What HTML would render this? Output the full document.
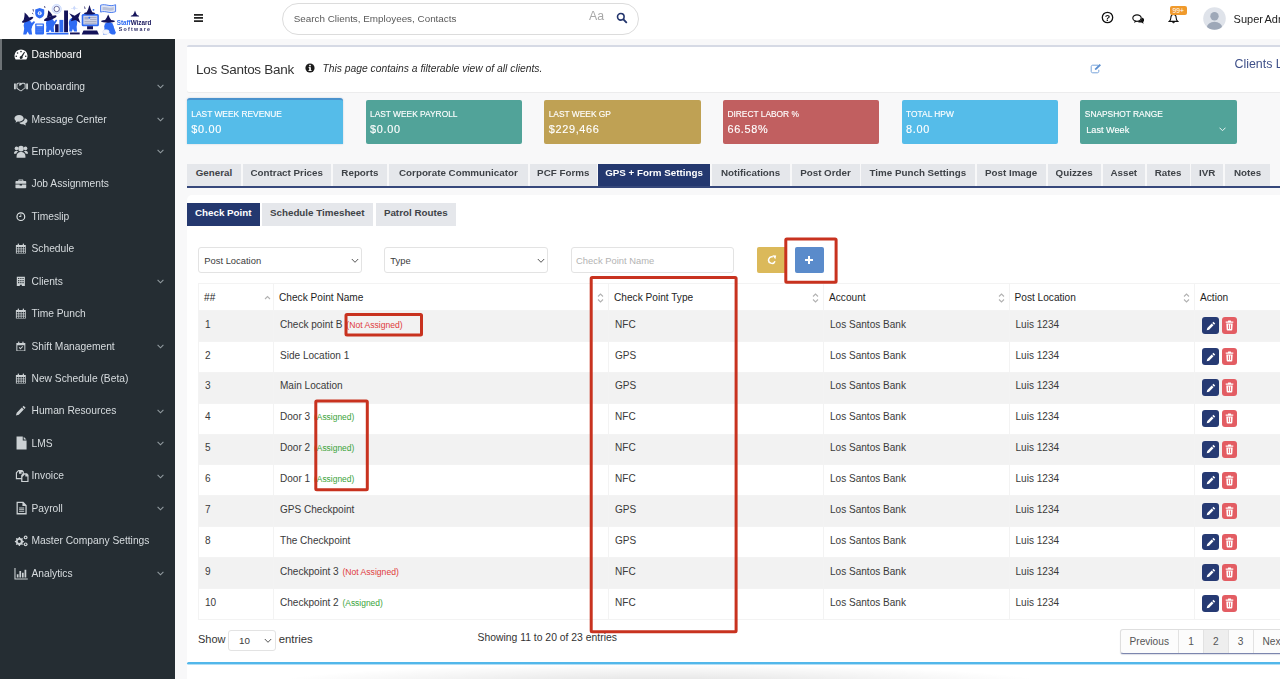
<!DOCTYPE html>
<html lang="en">
<head>
<meta charset="utf-8">
<title>Los Santos Bank - Check Point</title>
<style>
*{box-sizing:border-box;margin:0;padding:0}
html,body{width:1280px;height:679px;overflow:hidden;background:#f8f8f9;font-family:"Liberation Sans",sans-serif;color:#444}
.abs{position:absolute}
#page{position:relative;width:1280px;height:679px;overflow:hidden;opacity:.9999}
/* topbar */
#topbar{position:absolute;left:0;top:0;width:1280px;height:39px;background:#fff}
#search{position:absolute;left:282px;top:3px;width:357px;height:32px;border:1px solid #dcdcdc;border-radius:16px;background:#fff}
#search span.ph{position:absolute;left:10.7px;top:8.7px;font-size:9.87px;color:#5a5a5a;letter-spacing:0px;white-space:nowrap}
/* sidebar */
#sidebar{position:absolute;left:0;top:39px;width:175px;height:640px;background:#252d33}
#sidebar .active{position:absolute;left:0;top:0;width:175px;height:30.7px;background:#20272b;border-left:2px solid #6d7275}
.mi{position:absolute;left:0;width:175px;height:16px;color:#d7dcdf;font-size:10.25px;white-space:nowrap}
.mi .t{position:absolute;left:31.5px;top:.7px;line-height:16px;letter-spacing:0}
.mi svg.ic{position:absolute;left:14px;top:1.8px;width:14px;height:12.9px;fill:#ccd1d4}
.mi svg.ic.sm{left:15.3px;top:2.6px;width:11.7px;height:10.8px}
.mi svg.ic.fl{left:13.6px;top:1px;width:15px;height:13.85px}
.mi svg.ch{position:absolute;left:157px;top:6px;width:7px;height:5px;fill:none;stroke:#919a9f;stroke-width:1.1}
/* content */
#hdr{position:absolute;left:187px;top:45px;width:1200px;height:46.5px;background:#fff;border-top:2px solid #d6dae5;border-radius:2px;box-shadow:0 1px 1px rgba(0,0,0,.06)}
.card{position:absolute;top:100px;width:156.5px;height:44px;border-radius:2px;color:#fff}
.card .l{position:absolute;left:4.5px;top:9.1px;font-size:8.4px;white-space:nowrap;-webkit-text-stroke:.13px #fff}
.card .v{position:absolute;left:4.5px;top:23px;font-size:10.9px;letter-spacing:.68px;white-space:nowrap;-webkit-text-stroke:.13px #fff}
.tab{position:absolute;top:164px;height:22px;background:#e5e7eb;color:#3f4348;font-weight:bold;font-size:9.8px;line-height:18.6px;text-align:center;white-space:nowrap}
.tab.on{background:#24386f;color:#fff}
#tabline{position:absolute;left:187px;top:186px;width:1100px;height:1.6px;background:#36487b}
#panel{position:absolute;left:187px;top:195px;width:1200px;height:490px;background:#fff;border-radius:5px 0 0 0}
#bline{position:absolute;left:187px;top:662px;width:1200px;height:3px;background:linear-gradient(#52b7ea 0,#52b7ea 2px,rgba(82,183,234,.45) 2px,rgba(82,183,234,.45) 3px);border-radius:2px 0 0 2px}
#bshadow{position:absolute;left:270px;top:664.5px;width:780px;height:14.5px;background:radial-gradient(ellipse 390px 20px at 50% 135%,rgba(0,0,0,.12),rgba(0,0,0,0) 100%)}
.sel{position:absolute;top:247px;height:26px;border:1px solid #e3e3e3;border-radius:3px;background:#fff;font-size:9.4px;color:#3c3c3c;line-height:25px;padding-left:5.3px;white-space:nowrap}
.sel svg{position:absolute;right:2px;top:9.5px;width:8px;height:6px;fill:none;stroke:#555;stroke-width:1}
table{position:absolute;left:198px;top:283px;border-collapse:collapse;table-layout:fixed;width:1200px;font-size:10.05px}
th,td{border:1px solid #f3f3f3;text-align:left;font-weight:normal;white-space:nowrap;overflow:hidden;position:relative}
th{height:27px;color:#1f1f1f;padding-left:5px;font-size:10.15px}
td{height:30.875px;color:#3a3a3a;padding-left:6px;padding-bottom:3.6px}
tr.o td{background:#f2f2f2}
.na{color:#e03a3a;font-size:8.6px;margin-left:1px}
.as{color:#3aa43a;font-size:8.45px;margin-left:1px}
.srt{position:absolute;right:4px;top:8px;width:7px;height:12px;fill:none;stroke:#b2b2b2;stroke-width:1.1}
.be,.bd{position:absolute;top:6.4px;height:16.8px;border-radius:3px}
.be{left:7.4px;width:16.4px;background:#263a73}
.bd{left:26.8px;width:15.3px;background:#e35d63}
.red{position:absolute;border:2.5px solid #cc3524;border-radius:1px}
</style>
</head>
<body>
<div id="page">

<div id="panel"></div><div id="bline"></div><div id="bshadow"></div>
<div class="tab on" style="top:203px;height:22.5px;line-height:19px;left:187px;width:72.5px">Check Point</div>
<div class="tab" style="top:203px;height:22.5px;line-height:19px;left:261.5px;width:111.5px">Schedule Timesheet</div>
<div class="tab" style="top:203px;height:22.5px;line-height:19px;left:375.5px;width:80.5px">Patrol Routes</div>
<div class="sel" style="left:198px;width:163.6px">Post Location<svg viewBox="0 0 8 6"><path d="M.8 1L4 4.3 7.200 1"/></svg></div>
<div class="sel" style="left:384px;width:164px">Type<svg viewBox="0 0 8 6"><path d="M.8 1L4 4.3 7.200 1"/></svg></div>
<div class="sel" style="left:571px;width:163px;color:#b3b3b3;padding-left:4px">Check Point Name</div>
<div class="abs" style="left:757px;top:247px;width:29.5px;height:26px;background:#dbb95a;border-radius:2px"><svg class="abs" style="left:9.5px;top:8px" width="10" height="10" viewBox="0 0 10 10"><path d="M8 6.2A3.300 3.300 0 115.900 1.900" fill="none" stroke="#fff" stroke-width="1.5"/><path d="M5.300.2L9.200.6 8.300 4.200z" fill="#fff"/></svg></div>
<div class="abs" style="left:786px;top:239px;width:50px;height:43.5px;background:#fff"></div>
<div class="abs" style="left:794.5px;top:247px;width:29.5px;height:26px;background:#5a8bcb;border-radius:2px"><svg class="abs" style="left:10.5px;top:9px" width="8" height="8" viewBox="0 0 8 8"><path d="M3 0h2v3h3v2H5v3H3V5H0V3h3z" fill="#fff"/></svg></div>
<table><colgroup><col style="width:75px"><col style="width:335px"><col style="width:215px"><col style="width:185.5px"><col style="width:185.5px"><col style="width:204px"></colgroup>
<tr><th>##<svg class="srt" style="right:1.7px" viewBox="0 0 7 12"><path d="M1 7L3.500 4.500 6 7"/></svg></th><th>Check Point Name<svg class="srt" viewBox="0 0 7 12"><path d="M1 4.500L3.500 2 6 4.500M1 7.500L3.500 10 6 7.500"/></svg></th><th>Check Point Type<svg class="srt" viewBox="0 0 7 12"><path d="M1 4.500L3.500 2 6 4.500M1 7.500L3.500 10 6 7.500"/></svg></th><th>Account<svg class="srt" viewBox="0 0 7 12"><path d="M1 4.500L3.500 2 6 4.500M1 7.500L3.500 10 6 7.500"/></svg></th><th>Post Location<svg class="srt" viewBox="0 0 7 12"><path d="M1 4.500L3.500 2 6 4.500M1 7.500L3.500 10 6 7.500"/></svg></th><th>Action</th></tr>
<tr class="o"><td>1</td><td>Check point B <span class="na">(Not Assigned)</span></td><td>NFC</td><td>Los Santos Bank</td><td>Luis 1234</td><td><span class="be"><svg class="abs" style="left:3.5px;top:3.5px" width="10" height="10" viewBox="0 0 10 10"><path d="M7.400.8l1.800 1.800-1.100 1.100-1.800-1.800zM5.700 2.500l1.800 1.800-4.400 4.400-2.400.6.600-2.400z" fill="#fff"/></svg></span><span class="bd"><svg class="abs" style="left:3.5px;top:3px" width="9" height="11" viewBox="0 0 9 11"><path d="M3.200.6h2.600l.4.900h2.100v1.200H.7V1.500h2.100zM1.300 3.400h6.400l-.4 6.300c0 .5-.4.800-.8.800h-4c-.4 0-.8-.3-.8-.8zM3 4.600v4.500h.8V4.600zM5.200 4.600v4.500H6V4.600z" fill="#fff" fill-rule="evenodd"/></svg></span></td></tr>
<tr class="e"><td>2</td><td>Side Location 1 </td><td>GPS</td><td>Los Santos Bank</td><td>Luis 1234</td><td><span class="be"><svg class="abs" style="left:3.5px;top:3.5px" width="10" height="10" viewBox="0 0 10 10"><path d="M7.400.8l1.800 1.800-1.100 1.100-1.800-1.800zM5.700 2.500l1.800 1.800-4.400 4.400-2.400.6.600-2.400z" fill="#fff"/></svg></span><span class="bd"><svg class="abs" style="left:3.5px;top:3px" width="9" height="11" viewBox="0 0 9 11"><path d="M3.200.6h2.600l.4.900h2.100v1.200H.7V1.500h2.100zM1.300 3.400h6.400l-.4 6.300c0 .5-.4.800-.8.800h-4c-.4 0-.8-.3-.8-.8zM3 4.600v4.500h.8V4.600zM5.200 4.600v4.500H6V4.600z" fill="#fff" fill-rule="evenodd"/></svg></span></td></tr>
<tr class="o"><td>3</td><td>Main Location </td><td>GPS</td><td>Los Santos Bank</td><td>Luis 1234</td><td><span class="be"><svg class="abs" style="left:3.5px;top:3.5px" width="10" height="10" viewBox="0 0 10 10"><path d="M7.400.8l1.800 1.800-1.100 1.100-1.800-1.800zM5.700 2.500l1.800 1.800-4.400 4.400-2.400.6.600-2.400z" fill="#fff"/></svg></span><span class="bd"><svg class="abs" style="left:3.5px;top:3px" width="9" height="11" viewBox="0 0 9 11"><path d="M3.200.6h2.600l.4.900h2.100v1.200H.7V1.500h2.100zM1.300 3.400h6.400l-.4 6.300c0 .5-.4.800-.8.800h-4c-.4 0-.8-.3-.8-.8zM3 4.600v4.500h.8V4.600zM5.200 4.600v4.500H6V4.600z" fill="#fff" fill-rule="evenodd"/></svg></span></td></tr>
<tr class="e"><td>4</td><td>Door 3 <span class="as">(Assigned)</span></td><td>NFC</td><td>Los Santos Bank</td><td>Luis 1234</td><td><span class="be"><svg class="abs" style="left:3.5px;top:3.5px" width="10" height="10" viewBox="0 0 10 10"><path d="M7.400.8l1.800 1.800-1.100 1.100-1.800-1.800zM5.700 2.500l1.800 1.800-4.400 4.400-2.400.6.600-2.400z" fill="#fff"/></svg></span><span class="bd"><svg class="abs" style="left:3.5px;top:3px" width="9" height="11" viewBox="0 0 9 11"><path d="M3.200.6h2.600l.4.900h2.100v1.200H.7V1.500h2.100zM1.300 3.400h6.400l-.4 6.300c0 .5-.4.800-.8.800h-4c-.4 0-.8-.3-.8-.8zM3 4.600v4.500h.8V4.600zM5.200 4.600v4.500H6V4.600z" fill="#fff" fill-rule="evenodd"/></svg></span></td></tr>
<tr class="o"><td>5</td><td>Door 2 <span class="as">(Assigned)</span></td><td>NFC</td><td>Los Santos Bank</td><td>Luis 1234</td><td><span class="be"><svg class="abs" style="left:3.5px;top:3.5px" width="10" height="10" viewBox="0 0 10 10"><path d="M7.400.8l1.800 1.800-1.100 1.100-1.800-1.800zM5.700 2.500l1.800 1.800-4.400 4.400-2.400.6.600-2.400z" fill="#fff"/></svg></span><span class="bd"><svg class="abs" style="left:3.5px;top:3px" width="9" height="11" viewBox="0 0 9 11"><path d="M3.200.6h2.600l.4.900h2.100v1.200H.7V1.500h2.100zM1.300 3.400h6.400l-.4 6.300c0 .5-.4.800-.8.800h-4c-.4 0-.8-.3-.8-.8zM3 4.600v4.500h.8V4.600zM5.200 4.600v4.500H6V4.600z" fill="#fff" fill-rule="evenodd"/></svg></span></td></tr>
<tr class="e"><td>6</td><td>Door 1 <span class="as">(Assigned)</span></td><td>NFC</td><td>Los Santos Bank</td><td>Luis 1234</td><td><span class="be"><svg class="abs" style="left:3.5px;top:3.5px" width="10" height="10" viewBox="0 0 10 10"><path d="M7.400.8l1.800 1.800-1.100 1.100-1.800-1.800zM5.700 2.500l1.800 1.800-4.400 4.400-2.400.6.600-2.400z" fill="#fff"/></svg></span><span class="bd"><svg class="abs" style="left:3.5px;top:3px" width="9" height="11" viewBox="0 0 9 11"><path d="M3.200.6h2.600l.4.900h2.100v1.200H.7V1.500h2.100zM1.300 3.400h6.400l-.4 6.300c0 .5-.4.800-.8.800h-4c-.4 0-.8-.3-.8-.8zM3 4.600v4.500h.8V4.600zM5.200 4.600v4.500H6V4.600z" fill="#fff" fill-rule="evenodd"/></svg></span></td></tr>
<tr class="o"><td>7</td><td>GPS Checkpoint </td><td>GPS</td><td>Los Santos Bank</td><td>Luis 1234</td><td><span class="be"><svg class="abs" style="left:3.5px;top:3.5px" width="10" height="10" viewBox="0 0 10 10"><path d="M7.400.8l1.800 1.800-1.100 1.100-1.800-1.800zM5.700 2.500l1.800 1.800-4.400 4.400-2.400.6.600-2.400z" fill="#fff"/></svg></span><span class="bd"><svg class="abs" style="left:3.5px;top:3px" width="9" height="11" viewBox="0 0 9 11"><path d="M3.200.6h2.600l.4.900h2.100v1.200H.7V1.500h2.100zM1.300 3.400h6.400l-.4 6.300c0 .5-.4.800-.8.800h-4c-.4 0-.8-.3-.8-.8zM3 4.600v4.500h.8V4.600zM5.200 4.600v4.500H6V4.600z" fill="#fff" fill-rule="evenodd"/></svg></span></td></tr>
<tr class="e"><td>8</td><td>The Checkpoint </td><td>GPS</td><td>Los Santos Bank</td><td>Luis 1234</td><td><span class="be"><svg class="abs" style="left:3.5px;top:3.5px" width="10" height="10" viewBox="0 0 10 10"><path d="M7.400.8l1.800 1.800-1.100 1.100-1.800-1.800zM5.700 2.500l1.800 1.800-4.400 4.400-2.400.6.600-2.400z" fill="#fff"/></svg></span><span class="bd"><svg class="abs" style="left:3.5px;top:3px" width="9" height="11" viewBox="0 0 9 11"><path d="M3.200.6h2.600l.4.900h2.100v1.200H.7V1.500h2.100zM1.300 3.400h6.400l-.4 6.300c0 .5-.4.800-.8.800h-4c-.4 0-.8-.3-.8-.8zM3 4.600v4.500h.8V4.600zM5.200 4.600v4.500H6V4.600z" fill="#fff" fill-rule="evenodd"/></svg></span></td></tr>
<tr class="o"><td>9</td><td>Checkpoint 3 <span class="na">(Not Assigned)</span></td><td>NFC</td><td>Los Santos Bank</td><td>Luis 1234</td><td><span class="be"><svg class="abs" style="left:3.5px;top:3.5px" width="10" height="10" viewBox="0 0 10 10"><path d="M7.400.8l1.800 1.800-1.100 1.100-1.800-1.800zM5.700 2.500l1.800 1.800-4.400 4.400-2.400.6.600-2.400z" fill="#fff"/></svg></span><span class="bd"><svg class="abs" style="left:3.5px;top:3px" width="9" height="11" viewBox="0 0 9 11"><path d="M3.200.6h2.600l.4.900h2.100v1.200H.7V1.500h2.100zM1.300 3.400h6.400l-.4 6.300c0 .5-.4.800-.8.800h-4c-.4 0-.8-.3-.8-.8zM3 4.600v4.500h.8V4.600zM5.200 4.600v4.500H6V4.600z" fill="#fff" fill-rule="evenodd"/></svg></span></td></tr>
<tr class="e"><td>10</td><td>Checkpoint 2 <span class="as">(Assigned)</span></td><td>NFC</td><td>Los Santos Bank</td><td>Luis 1234</td><td><span class="be"><svg class="abs" style="left:3.5px;top:3.5px" width="10" height="10" viewBox="0 0 10 10"><path d="M7.400.8l1.800 1.800-1.100 1.100-1.800-1.800zM5.700 2.500l1.800 1.800-4.400 4.400-2.400.6.600-2.400z" fill="#fff"/></svg></span><span class="bd"><svg class="abs" style="left:3.5px;top:3px" width="9" height="11" viewBox="0 0 9 11"><path d="M3.200.6h2.600l.4.900h2.100v1.200H.7V1.500h2.100zM1.300 3.400h6.400l-.4 6.300c0 .5-.4.800-.8.800h-4c-.4 0-.8-.3-.8-.8zM3 4.600v4.500h.8V4.600zM5.200 4.600v4.500H6V4.600z" fill="#fff" fill-rule="evenodd"/></svg></span></td></tr>
</table>
<div class="abs" style="left:198px;top:633.2px;font-size:11px;color:#333;white-space:nowrap">Show</div>
<div class="sel" style="left:228px;top:629.5px;width:47.5px;height:21.5px;line-height:20px;padding-left:10px;font-size:9.8px">10<svg style="top:7px;right:3px" viewBox="0 0 8 6"><path d="M.8 1L4 4.3 7.200 1"/></svg></div>
<div class="abs" style="left:278.7px;top:633px;font-size:11.3px;color:#333;white-space:nowrap">entries</div>
<div class="abs" style="left:477.5px;top:632.2px;font-size:10.38px;color:#333;white-space:nowrap">Showing 11 to 20 of 23 entries</div>
<div class="abs" id="pg" style="left:1119.5px;top:629px;height:25px;width:200px;border:1px solid #dedede;border-bottom:1.5px solid #7c86ae;border-radius:3px 0 0 3px;background:#fcfcfc;font-size:10.15px;color:#555;line-height:23px;white-space:nowrap;box-shadow:0 1px 1px rgba(40,50,100,.15)"><span class="abs" style="left:0;width:58.5px;text-align:center;border-right:1px solid #e2e2e2">Previous</span><span class="abs" style="left:58.5px;width:25px;text-align:center;border-right:1px solid #e2e2e2">1</span><span class="abs" style="left:83.5px;width:24.5px;text-align:center;border-right:1px solid #e2e2e2;background:#eee">2</span><span class="abs" style="left:108px;width:25px;text-align:center;border-right:1px solid #e2e2e2">3</span><span class="abs" style="left:133px;width:50px;padding-left:9px">Next</span></div>

<div id="hdr">
<div class="abs" style="left:9px;top:15px;font-size:13.5px;letter-spacing:-.27px;color:#333;white-space:nowrap">Los Santos Bank</div>
<svg class="abs" style="left:118.3px;top:15.6px" width="10" height="10" viewBox="0 0 10 10"><circle cx="5" cy="5" r="4.600" fill="#1c1c1c"/><rect x="4.200" y="4.200" width="1.700" height="3.500" fill="#fff"/><rect x="3.600" y="4.200" width="1.400" height=".9" fill="#fff"/><rect x="3.500" y="7" width="3.100" height=".9" fill="#fff"/><circle cx="5" cy="2.600" r=".95" fill="#fff"/></svg>
<div class="abs" style="left:135.5px;top:16px;font-size:10.3px;font-style:italic;color:#2b2b2b;white-space:nowrap">This page contains a filterable view of all clients.</div>
<svg class="abs" style="left:902.7px;top:16.2px" width="12" height="11" viewBox="0 0 12 11"><path d="M8.200 2.200H2.600c-.8 0-1.400.6-1.400 1.400v4.800c0 .8.600 1.400 1.400 1.400h4.800c.8 0 1.400-.6 1.400-1.400V6.800" fill="none" stroke="#6a9ad6" stroke-width=".9"/><path d="M9.600.9l1.400 1.400-4.300 4.300-1.900.5.500-1.900z" fill="#5b8fd0"/></svg>
<div class="abs" style="left:1047.5px;top:10.4px;font-size:12.4px;color:#3f5089;white-space:nowrap">Clients List</div>
</div>
<div class="card" style="left:186.8px;top:98px;height:46px;background:#55bce9;border-top:2px solid #4a92cd;border-radius:3px 3px 0 0;box-shadow:0 0 2px rgba(80,120,160,.35)"><span class="l">LAST WEEK REVENUE</span><span class="v">$0.00</span></div>
<div class="card" style="left:365.5px;background:#51a399"><span class="l">LAST WEEK PAYROLL</span><span class="v">$0.00</span></div>
<div class="card" style="left:544.2px;background:#bfa154"><span class="l">LAST WEEK GP</span><span class="v">$229,466</span></div>
<div class="card" style="left:722.9px;background:#c15f60"><span class="l">DIRECT LABOR %</span><span class="v">66.58%</span></div>
<div class="card" style="left:901.6px;background:#55bce9"><span class="l">TOTAL HPW</span><span class="v">8.00</span></div>
<div class="card" style="left:1080.3px;background:#51a399"><span class="l">SNAPSHOT RANGE</span><span class="v" style="left:6px;top:24.6px;font-size:9.14px;letter-spacing:0">Last Week</span><svg class="abs" style="left:139px;top:27px" width="7" height="5" viewBox="0 0 7 5"><path d="M.5.700L3.500 3.700 6.500.700" fill="none" stroke="#e8f3f1" stroke-width="1"/></svg></div>
<div class="tab" style="left:187px;width:53.75px">General</div>
<div class="tab" style="left:242.5px;width:88.5px">Contract Prices</div>
<div class="tab" style="left:333px;width:53.75px">Reports</div>
<div class="tab" style="left:388.75px;width:139.25px">Corporate Communicator</div>
<div class="tab" style="left:530px;width:66.5px">PCF Forms</div>
<div class="tab on" style="left:598px;width:112px">GPS + Form Settings</div>
<div class="tab" style="left:711.5px;width:78.25px">Notifications</div>
<div class="tab" style="left:791.5px;width:68.0px">Post Order</div>
<div class="tab" style="left:861.25px;width:113.25px">Time Punch Settings</div>
<div class="tab" style="left:976.5px;width:69.25px">Post Image</div>
<div class="tab" style="left:1047.5px;width:53.25px">Quizzes</div>
<div class="tab" style="left:1102.5px;width:42.5px">Asset</div>
<div class="tab" style="left:1146.75px;width:42.75px">Rates</div>
<div class="tab" style="left:1191.25px;width:32.0px">IVR</div>
<div class="tab" style="left:1225px;width:45px">Notes</div>
<div id="tabline"></div>
<svg class="abs" style="left:0;top:0;pointer-events:none" width="1280" height="679" viewBox="0 0 1280 679"><g fill="none" stroke="#c8321f" stroke-width="3"><rect x="591.20" y="277.50" width="144.90" height="354.20" rx="1"/><rect x="346.00" y="314.60" width="75.50" height="20.50" rx="1"/><rect x="315.80" y="401.00" width="51.50" height="88.80" rx="1"/><rect x="785.80" y="239.00" width="50.30" height="43.30" rx="1"/></g></svg>
<div id="topbar">
<svg class="abs" style="left:0;top:0" width="175" height="39" viewBox="0 0 175 39">
 <g fill="#2e6bf4">
  <ellipse cx="28" cy="25.500" rx="4.300" ry="5.200"/><path d="M24.500 27l-1.300 7.400h3l1.500-3 1.400 3h3l-1-7.400z"/><path d="M30.500 24l3.500-3 1 1.300-3 4z"/>
  <path d="M35.200 9.400l4.500-1.400 4.500 1.400v4.200c0 2.500-2 4.200-4.500 5-2.500-.8-4.500-2.500-4.500-5z"/>
  <rect x="35.200" y="23.400" width="8.800" height="11" rx=".8"/>
  <ellipse cx="50.200" cy="23.500" rx="4.200" ry="5.200"/><path d="M46.500 25l-.5 7h2.800l1.200-2.600 1.400 2.600h2.800l-.8-7z"/><path d="M52.500 23.500l3.600-4 1 1-3 5z"/>
  <rect x="59.400" y="19.900" width="3.900" height="12.300"/>
  <rect x="46.500" y="32.800" width="22" height="1.700"/>
  <ellipse cx="73" cy="23" rx="4.200" ry="5.400"/><path d="M69.500 24l-.3 7.400h2.700l1-2.600 1.300 2.600h2.800l-.6-7.400z"/>
  <rect x="81.700" y="14" width="17.200" height="12.200" rx="1.500"/>
  <ellipse cx="108.800" cy="26.500" rx="4.600" ry="4.600"/><path d="M105 27l-2 7.400h3.500l2-2 3.400 2h2.800l1.200-1.600-3-8z"/>
  <circle cx="93.500" cy="9.800" r=".9"/>
 </g>
 <g fill="#14135a">
  <path d="M24.600 12.500c2 1.500 3.500 3.300 4.500 5.300l-5.600 2.700c.8-2.600 1.200-5.200 1.100-8z"/><ellipse cx="27.600" cy="19.800" rx="6.200" ry="1.700" transform="rotate(-24 27.600 19.800)"/>
  <path d="M48.100 10.200c2 1.500 3.500 3.300 4.500 5.400l-6 2.500c1-2.500 1.500-5.100 1.500-7.900z"/><ellipse cx="50.300" cy="18.200" rx="6.700" ry="1.800" transform="rotate(-20 50.300 18.200)"/>
  <rect x="55.100" y="24.200" width="3.500" height="8"/>
  <rect x="64.100" y="10.500" width="3.900" height="21.700"/>
  <path d="M69.200 13.200l5.400 2.600 5.900-3.700-2.100 5.700 2 5.300-5-3.200-4.500 1.400 1.400-3.900z"/>
  <rect x="70" y="32.500" width="9.700" height="1.900"/>
  <path d="M89.500 5.100c.8 2.900 1.800 5.500 3.200 7.900h-6.400c1.400-2.400 2.500-5 3.200-7.900z"/><ellipse cx="89.600" cy="13.300" rx="5.800" ry="1.300"/>
  <rect x="87.100" y="26.200" width="5.900" height="3.100"/>
  <path d="M83.500 30.500h13.600l1.800 3.900H81.700z"/>
  <path d="M108.200 14.500c.9 2.300 2 4.400 3.400 6.300h-7c1.500-1.900 2.700-4 3.600-6.300z"/><ellipse cx="108" cy="21.300" rx="7" ry="1.500"/>
  <path d="M135 10.500c.6 1.700 1.200 3.200 2 4.600l1.900.7c.4.300.2.800-.3.800h-7.300c-.5 0-.7-.5-.3-.8l1.900-.7c.9-1.400 1.600-2.900 2.100-4.600z"/>
 </g>
 <rect x="83.300" y="15.700" width="14" height="8.800" fill="#cfd3e4"/>
 <path d="M84.500 17h4v2.500h-4zM90 17h6.500v1h-6.500zM90 19h6.500v1h-6.500zM84.500 21h12v1h-12zM84.500 22.800h12v.9h-12z" fill="#a9aec6"/>
 <circle cx="89.300" cy="17.800" r="1" fill="#2e6bf4"/>
 <rect x="36.500" y="24.600" width="6.200" height="1.600" fill="#e8eefc"/>
 <path d="M36.500 27.500h6.200v.8h-6.200zM36.500 29.500h6.200v.8h-6.200zM36.500 31.500h6.200v.8h-6.200z" fill="#5b8af6"/>
 <circle cx="39.700" cy="13.200" r="2" fill="#e6edfd"/><rect x="39.300" y="12" width=".8" height="2.400" fill="#2e6bf4"/>
 <ellipse cx="106" cy="32" rx="3.300" ry="2.400" fill="#f4f6fd" stroke="#c9d3f3" stroke-width=".4"/>
 <path d="M100.600 5.200c2.500-1 5-.4 7.500.1s5 .5 7.500-.6v6.900c-2.500 1.100-5 1.100-7.500.6s-5-1.100-7.500-.1z" fill="#dfe5f5" stroke="#3e73ee" stroke-width=".9"/>
 <path d="M102.500 7.300c2-.6 4-.2 5.600.1 2 .4 3.800.4 5.600-.3v3c-1.800.7-3.600.7-5.600.3-1.600-.3-3.600-.7-5.600-.1z" fill="#b9c1d9"/>
 <circle cx="56.700" cy="9" r="4.600" fill="#e4edff" stroke="#b8cdfb" stroke-width=".6"/>
 <circle cx="56.700" cy="9" r="2.700" fill="#fff" stroke="#3b3a78" stroke-width=".7"/>
 <path d="M74.300 5.800l1.400 2.200-1.400 2.600-1.400-2.600zM71 8.200h6.600v.5H71z" fill="#c9d8fb"/>
 <path d="M33 9l.5 2.500M32 13l1.300 1M44.500 6l.5 2M84.500 6.500l.6 2.500" stroke="#14135a" stroke-width=".7" fill="none"/>
 <text x="116.700" y="25.200" font-family="Liberation Sans,sans-serif" font-weight="bold" font-size="6.300" fill="#2e6bf4" letter-spacing="0">Staff<tspan fill="#14135a">Wizard</tspan></text>
 <text x="118.800" y="31.100" font-family="Liberation Sans,sans-serif" font-weight="bold" font-size="5.300" fill="#2b2b66" letter-spacing="1.250">Software</text>
</svg>
<svg class="abs" style="left:194px;top:13.5px" width="9" height="8" viewBox="0 0 9 8"><path d="M0 0h9v1.700H0zM0 3.100h9v1.700H0zM0 6.200h9v1.700H0z" fill="#222"/></svg>
<div id="search"><span class="ph">Search Clients, Employees, Contacts</span>
 <span class="abs" style="left:306px;top:5.2px;font-size:12.3px;color:#a8a8a8">Aa</span>
 <svg class="abs" style="left:333px;top:7.8px" width="12" height="12" viewBox="0 0 12 12"><circle cx="4.800" cy="4.800" r="3.300" fill="none" stroke="#22346c" stroke-width="1.600"/><path d="M7.400 7.400L10.300 10.300" stroke="#22346c" stroke-width="1.900" stroke-linecap="round"/></svg>
</div>
<svg class="abs" style="left:1101.2px;top:11px" width="13" height="13" viewBox="0 0 13 13"><circle cx="6.500" cy="6.500" r="5.200" fill="none" stroke="#111" stroke-width="1.300"/><text x="6.500" y="9.700" text-anchor="middle" font-family="Liberation Sans,sans-serif" font-weight="bold" font-size="9" fill="#111">?</text></svg>
<svg class="abs" style="left:1131.5px;top:13.6px" width="12.5" height="10.700" viewBox="0 0 14 12"><path d="M10.800 3.800c1.700.4 2.900 1.500 2.900 2.900 0 .9-.5 1.700-1.300 2.200l.7 2-2.600-1.300c-1.800.2-3.500-.3-4.400-1.300 2.900-.2 5-2 4.700-4.500z" fill="#111"/><ellipse cx="5.600" cy="4.600" rx="4.700" ry="3.600" fill="#fff" stroke="#111" stroke-width="1.300"/><path d="M3.200 7.400L2.300 10.200l3.300-2z" fill="#111"/></svg>
<svg class="abs" style="left:1168.3px;top:12px" width="11" height="14" viewBox="0 0 13 14"><path d="M6.500 1.600c-2 0-3.100 1.500-3.100 3.600 0 2.700-1 3.800-1.900 4.600h10c-.9-.8-1.900-1.900-1.900-4.600 0-2.100-1.100-3.600-3.100-3.600z" fill="none" stroke="#111" stroke-width="1.300"/><path d="M5.300 10.800a1.300 1.300 0 002.400 0z" fill="#111" stroke="#111" stroke-width=".8"/></svg>
<div class="abs" style="left:1170px;top:6px;width:16.500px;height:9px;background:#f09a2c;border-radius:2px;color:#fff;font-size:6.800px;line-height:9px;text-align:center">99+</div>
<svg class="abs" style="left:1203px;top:7px" width="23" height="23" viewBox="0 0 23 23"><defs><clipPath id="av"><circle cx="11.500" cy="11.500" r="11.300"/></clipPath></defs><circle cx="11.500" cy="11.500" r="11.300" fill="#dfe3ea"/><g clip-path="url(#av)" fill="#9ea8b8"><circle cx="11.500" cy="9.200" r="4.200"/><ellipse cx="11.500" cy="20.500" rx="7.600" ry="5.800"/></g></svg>
<div class="abs" style="left:1233.6px;top:12.6px;font-size:11px;word-spacing:-.9px;color:#222;white-space:nowrap">Super Admin</div>
</div>
<div id="sidebar"><div class="active"></div>
<div class="mi" style="top:7.0px;color:#fff"><svg class="ic" style="fill:#fff" viewBox="0 0 13 12"><path d="M6.500 1.300A6.100 6 0 00.400 7.300c0 1.300.4 2.400 1.100 3.400h10c.7-1 1.100-2.100 1.100-3.400A6.100 6 0 006.500 1.300zM6.500 2.600a.75.750 0 110 1.500.75.750 0 010-1.500zM3.300 3.900a.75.750 0 110 1.500.75.750 0 010-1.500zM2.100 6.900a.75.750 0 110 1.500.75.750 0 010-1.500zM10.900 6.900a.75.750 0 110 1.500.75.750 0 010-1.500zM9.500 3.600l.7.400-2.300 4.100a1.400 1.400 0 11-1.200-.7z" fill-rule="evenodd"/></svg><span class="t">Dashboard</span></div>
<div class="mi" style="top:39.4px"><svg class="ic" viewBox="0 0 13 12"><path d="M0 3.200h1.700v5.300H0zM11.300 3.200H13v5.300h-1.700zM2.200 3.600l1.500-1.100h2.200l.7.500.8-.5h2.100l1.300 1.100v4.300h-.9l-2.700 2.300c-.6.400-1.400.4-2-.1L2.200 7.900zM3.200 4.300v3.100l2.700 2.200c.3.200.6.200.9 0l2.700-2.200.4-.1V4.200l-.8-.7H8L6.300 5c-.6.500-1.500.3-1.800-.3l1-1.400-.1-.1H4.200z" fill-rule="evenodd"/></svg><span class="t">Onboarding</span><svg class="ch" viewBox="0 0 7 5"><path d="M.6.800L3.500 3.800 6.400.800"/></svg></div>
<div class="mi" style="top:71.9px"><svg class="ic" viewBox="0 0 13 12"><path d="M4.700 1.800C2.300 1.800.4 3.200.4 5c0 1 .6 1.900 1.600 2.500L1.300 9l2.200-1c.4.100.8.100 1.200.1C7.100 8.100 9 6.700 9 5S7.100 1.800 4.700 1.800zM10 4.900c0 2.200-2.300 4-5.100 4.100.8 1 2.200 1.500 3.700 1.400l2.500 1.200-.6-1.800c1.200-.6 2-1.500 2-2.600 0-1-.9-1.900-2.500-2.300z"/></svg><span class="t">Message Center</span><svg class="ch" viewBox="0 0 7 5"><path d="M.6.800L3.500 3.800 6.400.800"/></svg></div>
<div class="mi" style="top:104.3px"><svg class="ic" viewBox="0 0 13 12"><circle cx="6.500" cy="3.400" r="2.600"/><path d="M2.400 11.800c-.3-3.300 1.200-5.300 4.100-5.300s4.400 2 4.100 5.300z"/><circle cx="2.300" cy="3.200" r="1.700"/><circle cx="10.700" cy="3.200" r="1.700"/><path d="M0 8.200C-.1 6.200.8 5.300 2.400 5.300c.7 0 1.200.2 1.600.5-1 .6-1.700 1.400-1.900 2.400zM13 8.200c.1-2-.8-2.900-2.400-2.900-.7 0-1.200.2-1.600.5 1 .6 1.700 1.400 1.900 2.400z"/></svg><span class="t">Employees</span><svg class="ch" viewBox="0 0 7 5"><path d="M.6.800L3.500 3.800 6.400.800"/></svg></div>
<div class="mi" style="top:136.8px"><svg class="ic sm" viewBox="0 0 13 12"><path d="M4.400 1.700h4.200c.4 0 .7.300.7.700v1h2.400c.5 0 .8.300.8.800v2.300H.5V4.200c0-.5.300-.8.800-.8h2.400v-1c0-.4.300-.7.700-.7zM4.800 2.700v.7h3.400v-.7zM.5 7.200h4.700v1h2.600v-1h4.700v3.300c0 .5-.3.800-.8.800H1.300c-.5 0-.8-.3-.8-.8z" fill-rule="evenodd"/></svg><span class="t">Job Assignments</span></div>
<div class="mi" style="top:169.2px"><svg class="ic sm" viewBox="0 0 13 12"><circle cx="6.500" cy="6.300" r="4.300" fill="none" stroke="#dfe4e6" stroke-width="1.300"/><path d="M6 3.700h1v2.900H4.500v-1H6z"/></svg><span class="t">Timeslip</span></div>
<div class="mi" style="top:201.6px"><svg class="ic sm" viewBox="0 0 13 12"><path d="M1 2.300h11v9.500H1zM2 4.500v1.700h1.800V4.500zM4.600 4.500v1.700h1.800V4.500zM7.200 4.500v1.700H9V4.500zM9.800 4.500v1.700h1.300V4.500zM2 7v1.700h1.800V7zM4.600 7v1.700h1.800V7zM7.200 7v1.700H9V7zM9.800 7v1.700h1.300V7zM2 9.400V11h1.800V9.400zM4.600 9.400V11h1.800V9.400zM7.200 9.400V11H9V9.400zM9.800 9.400V11h1.300V9.400z" fill-rule="evenodd"/><rect x="3" y=".6" width="1.400" height="2.800" rx=".6"/><rect x="8.600" y=".6" width="1.400" height="2.800" rx=".6"/></svg><span class="t">Schedule</span></div>
<div class="mi" style="top:234.1px"><svg class="ic sm" viewBox="0 0 13 12"><path d="M2 .8h9v10.800H7.600V9.700H5.400v1.900H2zM3.500 2.200v1.200h1.300V2.200zM5.900 2.200v1.200h1.300V2.200zM8.300 2.200v1.200h1.300V2.200zM3.500 4.500v1.200h1.300V4.500zM5.900 4.500v1.200h1.300V4.500zM8.300 4.500v1.200h1.300V4.500zM3.500 6.800V8h1.300V6.800zM5.900 6.800V8h1.300V6.800zM8.300 6.800V8h1.300V6.800z" fill-rule="evenodd"/></svg><span class="t">Clients</span><svg class="ch" viewBox="0 0 7 5"><path d="M.6.800L3.500 3.800 6.400.800"/></svg></div>
<div class="mi" style="top:266.5px"><svg class="ic sm" viewBox="0 0 13 12"><path d="M1 2.300h11v9.500H1zM2 4.500v1.700h1.800V4.500zM4.600 4.500v1.700h1.800V4.500zM7.200 4.500v1.700H9V4.500zM9.800 4.500v1.700h1.300V4.500zM2 7v1.700h1.800V7zM4.600 7v1.700h1.800V7zM7.200 7v1.700H9V7zM9.800 7v1.700h1.300V7zM2 9.400V11h1.800V9.400zM4.600 9.400V11h1.800V9.400zM7.200 9.400V11H9V9.400zM9.800 9.400V11h1.300V9.400z" fill-rule="evenodd"/><rect x="3" y=".6" width="1.400" height="2.800" rx=".6"/><rect x="8.600" y=".6" width="1.400" height="2.800" rx=".6"/></svg><span class="t">Time Punch</span></div>
<div class="mi" style="top:299.0px"><svg class="ic sm" viewBox="0 0 13 12"><path d="M1.500 2.300h10v9.300h-10zM2.600 4.700v5.800h7.800V4.700z" fill-rule="evenodd"/><rect x="3.500" y=".6" width="1.300" height="2.600" rx=".6"/><rect x="8.200" y=".6" width="1.300" height="2.600" rx=".6"/><path d="M4.200 7.500l.8-.8 1.100 1.100 2.100-2.200.8.800L6.100 9.400z"/></svg><span class="t">Shift Management</span><svg class="ch" viewBox="0 0 7 5"><path d="M.6.800L3.500 3.800 6.400.800"/></svg></div>
<div class="mi" style="top:331.4px"><svg class="ic sm" viewBox="0 0 13 12"><path d="M1 2.300h11v9.500H1zM2 4.500v1.700h1.800V4.500zM4.600 4.500v1.700h1.800V4.500zM7.200 4.500v1.700H9V4.500zM9.800 4.500v1.700h1.300V4.500zM2 7v1.700h1.800V7zM4.600 7v1.700h1.800V7zM7.200 7v1.700H9V7zM9.800 7v1.700h1.300V7zM2 9.400V11h1.800V9.400zM4.600 9.400V11h1.800V9.400zM7.200 9.400V11H9V9.400zM9.800 9.400V11h1.300V9.400z" fill-rule="evenodd"/><rect x="3" y=".6" width="1.400" height="2.800" rx=".6"/><rect x="8.600" y=".6" width="1.400" height="2.800" rx=".6"/></svg><span class="t">New Schedule (Beta)</span></div>
<div class="mi" style="top:363.8px"><svg class="ic sm" viewBox="0 0 13 12"><path d="M9.600.9l2.200 2.200-1.300 1.300L8.300 2.200zM7.600 2.900l2.200 2.200-5.600 5.700L1 11.700l.9-3.100z"/></svg><span class="t">Human Resources</span><svg class="ch" viewBox="0 0 7 5"><path d="M.6.800L3.500 3.800 6.400.800"/></svg></div>
<div class="mi" style="top:396.3px"><svg class="ic fl" viewBox="0 0 13 12"><path d="M2.200.5h5.400v3.400h3.300v7.800H2.200zM8.400.6l2.400 2.500H8.400z"/></svg><span class="t">LMS</span><svg class="ch" viewBox="0 0 7 5"><path d="M.6.800L3.500 3.800 6.400.800"/></svg></div>
<div class="mi" style="top:428.7px"><svg class="ic fl" viewBox="0 0 13 12"><path d="M3.800.8h3.400l1.300 1.300v1.600h2.800l1.300 1.400v6.200H6.200V8.900H1.600V3zM4.300 1.800L2.600 3.500v4.400h3.600V5.400l1.300-1.500V2.500H6.600v1.600H4.300zM9.800 4.700l-.5.100-2 2.100v3.400h4.300V6.400h-1.800z" fill-rule="evenodd"/></svg><span class="t">Invoice</span><svg class="ch" viewBox="0 0 7 5"><path d="M.6.800L3.500 3.800 6.400.800"/></svg></div>
<div class="mi" style="top:461.2px"><svg class="ic fl" viewBox="0 0 13 12"><path d="M2.200.6h5.900l2.900 3v8H2.200zM3.300 1.700v8.800h6.600V4.400H7.300V1.700zM4.400 5.600h4.400v.8H4.400zM4.400 7.200h4.400V8H4.400zM4.400 8.800h4.400v.8H4.400z" fill-rule="evenodd"/></svg><span class="t">Payroll</span><svg class="ch" viewBox="0 0 7 5"><path d="M.6.800L3.500 3.800 6.400.800"/></svg></div>
<div class="mi" style="top:493.6px"><svg class="ic" viewBox="0 0 13 12"><path d="M4.600 2.700l.9.100.3 1 .9.400.9-.5.700.7-.5.900.4.900 1 .3v1l-1 .3-.4.900.5.900-.7.700-.9-.5-.9.400-.3 1h-1l-.3-1-.9-.4-.9.500-.7-.7.500-.9-.4-.9-1-.3v-1l1-.3.400-.9-.5-.9.700-.7.900.5.900-.4zM4.900 5.300a1.500 1.500 0 100 3 1.500 1.500 0 000-3z" fill-rule="evenodd"/><circle cx="10.800" cy="3.200" r="1.800"/><circle cx="10.800" cy="3.200" r=".7" fill="#252d33"/><circle cx="10.800" cy="9.600" r="1.800"/><circle cx="10.800" cy="9.600" r=".7" fill="#252d33"/></svg><span class="t">Master Company Settings</span></div>
<div class="mi" style="top:526.0px"><svg class="ic" viewBox="0 0 13 12"><path d="M.4 1h1v9.600h11.400v1H.4zM2.600 6.700h1.600v3.100H2.600zM5 3.800h1.600v6H5zM7.400 5.300H9v4.500H7.400zM9.800 2.600h1.600v7.200H9.800z"/></svg><span class="t">Analytics</span><svg class="ch" viewBox="0 0 7 5"><path d="M.6.800L3.500 3.800 6.400.800"/></svg></div>
</div>

</div>
</body>
</html>
